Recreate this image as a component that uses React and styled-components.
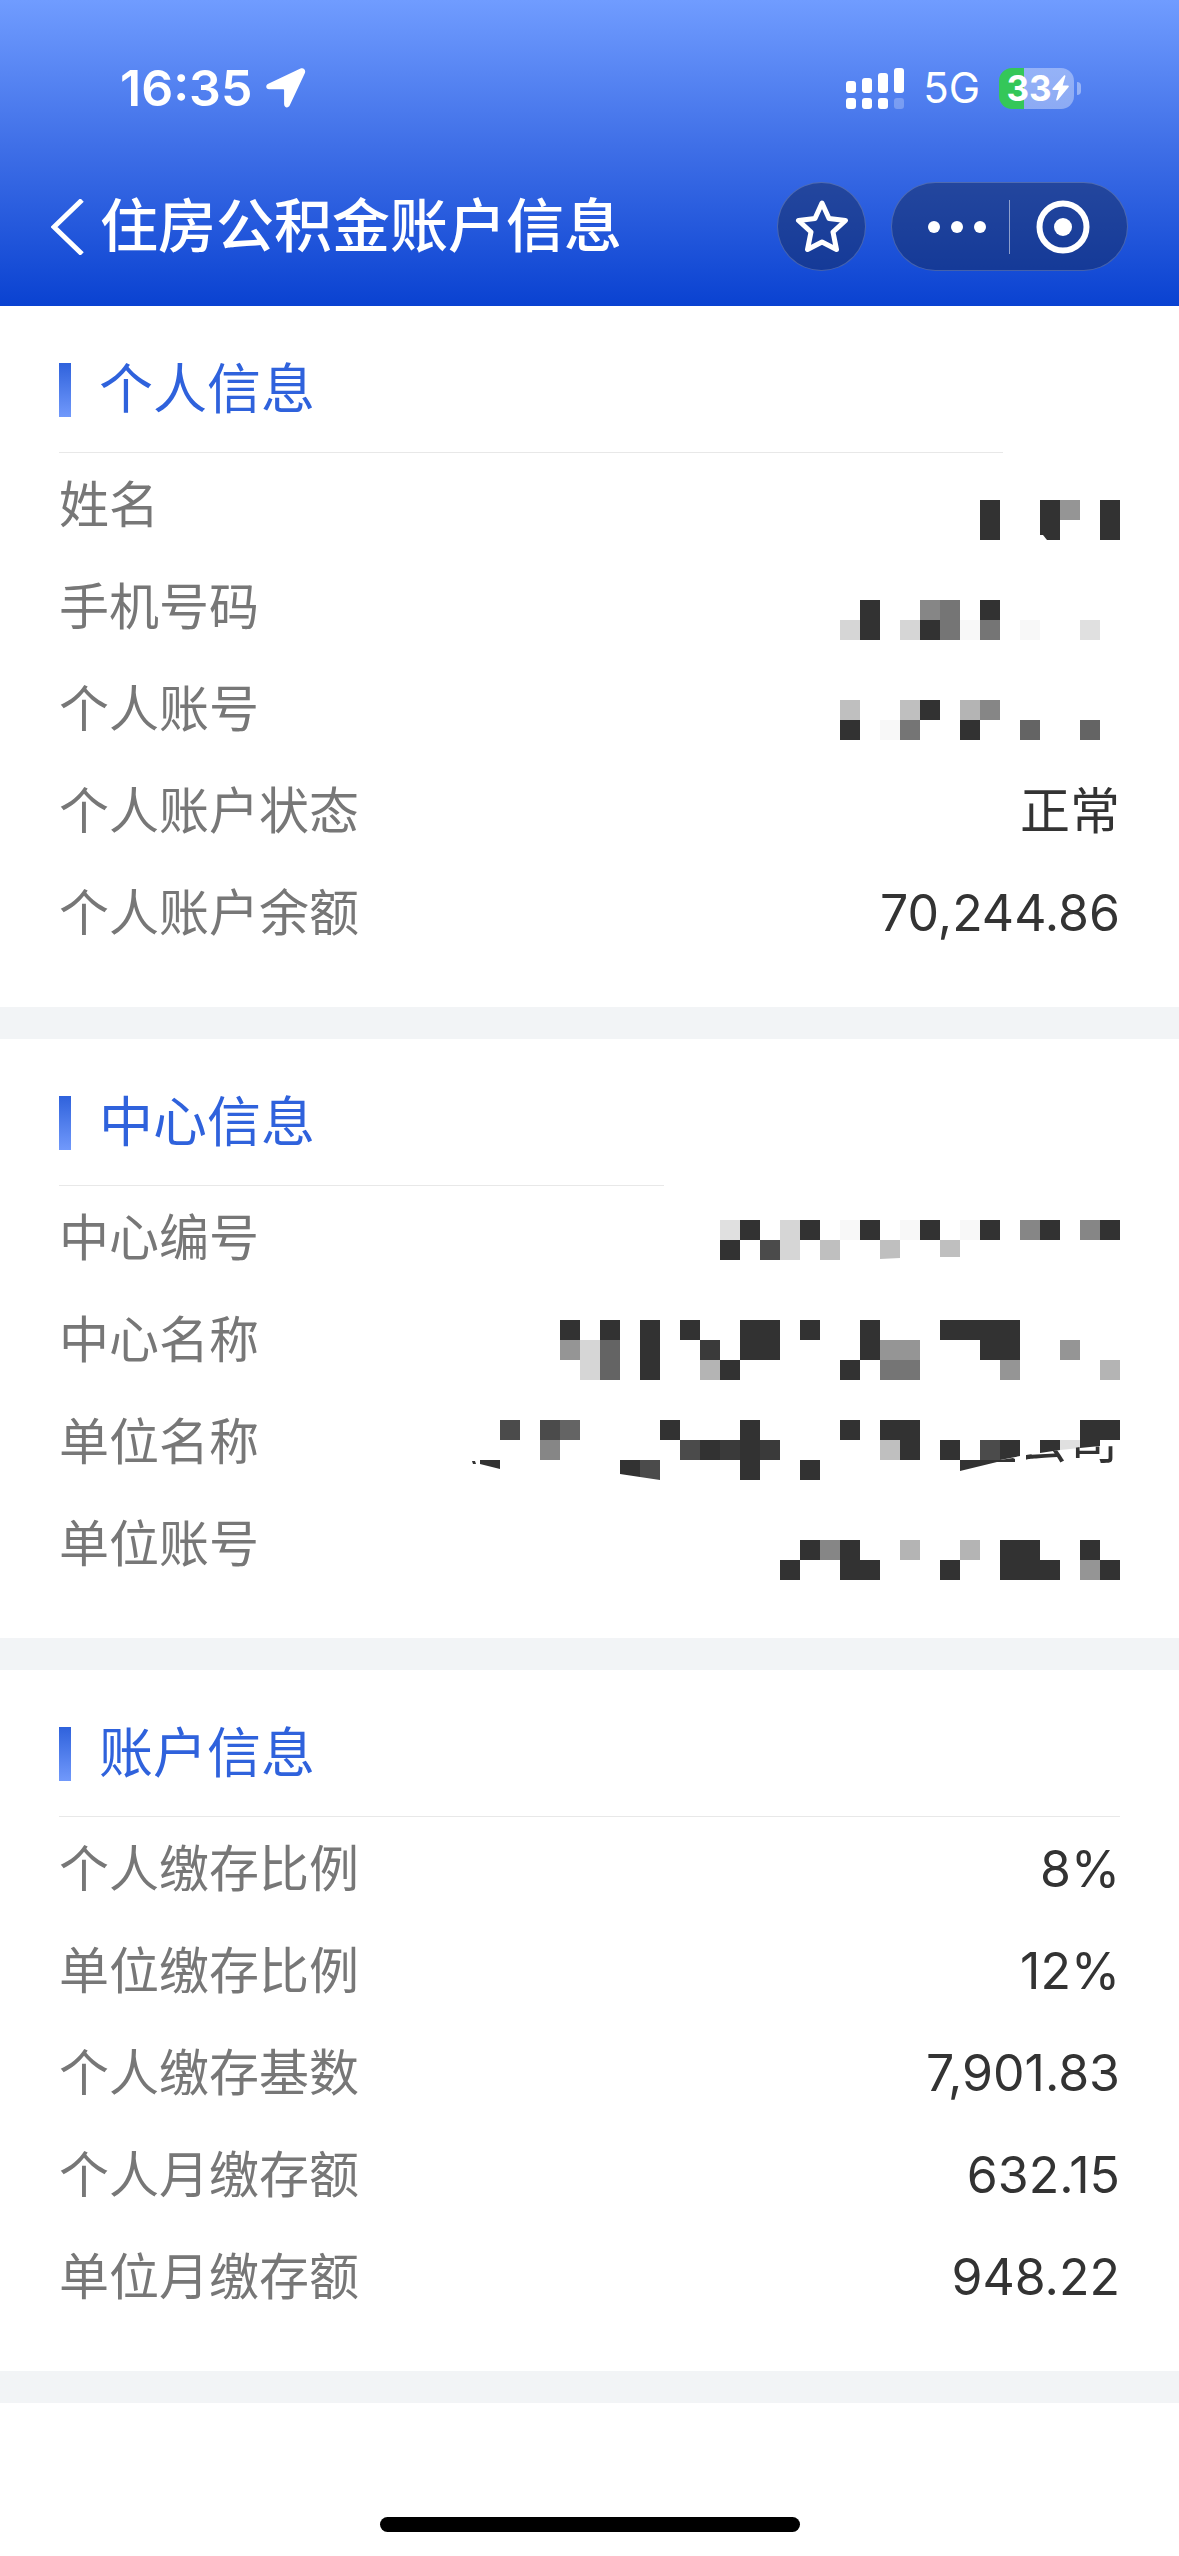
import React from "react";
import styled, { createGlobalStyle } from "styled-components";

const GlobalStyle = createGlobalStyle`
  *, *::before, *::after { box-sizing: border-box; }
  body {
    margin: 0;
    background: #fff;
    font-family: Inter, "Noto Sans CJK SC", sans-serif;
  }
`;

const Screen = styled.div`
  display: flex;
  flex-direction: column;
  min-height: 100vh;
`;

const Header = styled.header`
  padding-top: 60px;
  background: linear-gradient(#709cff, #3f6fe7 48%, #0a42d1);
  color: #fff;
`;

const StatusBar = styled.div`
  display: flex;
  align-items: center;
  justify-content: space-between;
  height: 56px;
  padding: 0 98px 0 120px;
`;

const StatusGroup = styled.div`
  display: flex;
  align-items: center;
  gap: ${(p) => p.$gap}px;
`;

const Time = styled.time`
  font-size: 50px;
  font-weight: 600;
  line-height: 56px;
`;

const Network = styled.span`
  font-size: 42px;
  line-height: 48px;
`;

const Battery = styled.span`
  display: flex;
  align-items: center;
  justify-content: center;
  width: 75px;
  height: 41px;
  padding-left: 2px;
  border-radius: 13px;
  background: linear-gradient(to right, #34c759 33%, rgba(255, 255, 255, 0.36) 33%);
  font-size: 35px;
  font-weight: 700;
  line-height: 41px;
`;

const BatteryTip = styled.span`
  width: 4px;
  height: 13px;
  border-radius: 0 6px 6px 0;
  background: rgba(255, 255, 255, 0.4);
`;

const NavBar = styled.nav`
  display: flex;
  align-items: center;
  margin-top: 66px;
  padding: 0 51px 35px;
`;

const IconButton = styled.button`
  display: flex;
  align-items: center;
  justify-content: center;
  padding: 0;
  border: 0;
  background: none;
  color: inherit;
`;

const Title = styled.h1`
  flex: 1;
  margin: 0 0 0 15px;
  font-size: 58px;
  font-weight: 500;
  line-height: 89px;
`;

const StarButton = styled(IconButton)`
  width: 89px;
  height: 89px;
  margin-right: 25px;
  border: 1px solid rgba(255, 255, 255, 0.2);
  border-radius: 50%;
  background: rgba(20, 40, 90, 0.5);
`;

const Capsule = styled.div`
  display: flex;
  align-items: center;
  width: 237px;
  height: 89px;
  border: 1px solid rgba(255, 255, 255, 0.2);
  border-radius: 45px;
  background: rgba(20, 40, 90, 0.5);
`;

const CapsuleButton = styled(IconButton)`
  flex: 1;
  height: 100%;
  padding: ${(p) => p.$padding};
`;

const CapsuleDivider = styled.span`
  width: 1px;
  height: 54px;
  background: rgba(255, 255, 255, 0.5);
`;

const Section = styled.section`
  padding: 57px 59px 42px;
  border-bottom: 32px solid #f2f4f6;
`;

const SectionHeading = styled.h2`
  display: flex;
  align-items: center;
  gap: 28px;
  height: 54px;
  margin: 0 0 35px;
  color: #2f62dc;
  font-size: 54px;
  font-weight: 400;
  line-height: 52px;

  &::before {
    content: "";
    width: 12px;
    height: 54px;
    background: linear-gradient(#2f62dc, #7199fb);
  }
`;

const Rule = styled.hr`
  width: ${(p) => p.$width};
  height: 1px;
  margin: 0 0 2px;
  border: 0;
  background: #e8e8e8;
`;

const Fields = styled.dl`
  margin: 0;
`;

const Field = styled.div`
  display: flex;
  align-items: center;
  justify-content: space-between;
  height: 102px;
  padding-bottom: 2px;
  font-size: 50px;
  line-height: 60px;
`;

const FieldLabel = styled.dt`
  color: #777;
`;

const FieldValue = styled.dd`
  margin: 0;
  color: #333;
`;

const MosaicSvg = styled.svg`
  display: block;
  overflow: visible;
`;

const HomeArea = styled.footer`
  display: flex;
  align-items: flex-end;
  justify-content: center;
  flex: 1;
  padding-bottom: 24px;
`;

const HomeIndicator = styled.div`
  width: 36%;
  max-width: 420px;
  height: 15px;
  border-radius: 8px;
  background: #000;
`;

const SHADES = {
  "#": "#323232",
  a: "#3a3a3a",
  b: "#4b4b4b",
  c: "#646464",
  d: "#757575",
  e: "#868686",
  f: "#959595",
  g: "#b4b4b4",
  h: "#bfbfbf",
  i: "#d6d6d6",
  j: "#e0e0e0",
  k: "#f8f8f8",
};

const CELL = 20;

/* Hides a private value behind grey cells, one character per cell. */
function Mosaic({ rows, top, children }) {
  const width = rows[0].length * CELL;
  return (
    <MosaicSvg width={width} height="100" viewBox={`0 0 ${width} 100`} role="img" aria-label="已隐藏">
      <g transform={`translate(0 ${top})`}>
        <g shapeRendering="crispEdges">
          {rows.flatMap((row, y) =>
            [...row].map((shade, x) =>
              SHADES[shade] ? (
                <rect key={`${x}-${y}`} x={x * CELL} y={y * CELL} width={CELL} height={CELL} fill={SHADES[shade]} />
              ) : null
            )
          )}
        </g>
        {children}
      </g>
    </MosaicSvg>
  );
}

const nameMosaic = (
  <Mosaic top={45} rows={["#..#f.#", "#..#..#"]}>
    <path d="M60 35h3l4 5v1h-7z" fill="#fff" />
  </Mosaic>
);

const phoneMosaic = <Mosaic top={43} rows={[".#..ed.#......", "i#.i#dkd.k..j."]} />;

const accountMosaic = <Mosaic top={41} rows={["h..h#.ge......", "#.kd..#..c..c."]} />;

const centerNoMosaic = (
  <Mosaic top={32} rows={["j#.i#.k#.k#.k#.e#.e#", "#.bi.h..h..h........"]}>
    <path d="M160 39l20-1v2h-20zM220 37h20v3h-20z" fill="#fff" />
  </Mosaic>
);

const centerNameMosaic = (
  <Mosaic
    top={30}
    rows={["#.#.#.#..##.#..#...####.....", "fic.#..a.##....#ff...##..f..", ".ic.#..g#.....#.dd....f....g"]}
  />
);

const unitNameMosaic = (
  <Mosaic
    top={28}
    rows={["..b.bc....#...#....#.##........##", "....e......b#a#a.....h#.#.b#.#j#.", ".#......#b....#..#..............."]}
  >
    <path d="M20 44l20 5v12H20zM160 54l40 6v1h-40z" fill="#fff" />
    <path d="M12 41h3l1 3h-3z" fill="#323232" />
    <path d="M540 40l20-4v5h-20zM580 33l20-3v11h-20zM600 30l20-2v13h-20zM620 28l20-2v15h-20z" fill="#fff" />
    <path d="M500 40h40l13-2 2 1v3h-18l-37 9z" fill="#323232" />
    <clipPath id="residue">
      <path d="M566 35L620 27L660 26V60H566z" />
    </clipPath>
    <text x="558" y="39" fontSize="50" fill="#323232" clipPath="url(#residue)">
      公司
    </text>
  </Mosaic>
);

const unitAccountMosaic = <Mosaic top={46} rows={[".#e#..g..g.##..#.", "#..##...#..###.f#"]} />;

const SECTIONS = [
  {
    title: "个人信息",
    rule: "89%",
    fields: [
      ["姓名", nameMosaic],
      ["手机号码", phoneMosaic],
      ["个人账号", accountMosaic],
      ["个人账户状态", "正常"],
      ["个人账户余额", "70,244.86"],
    ],
  },
  {
    title: "中心信息",
    rule: "57%",
    fields: [
      ["中心编号", centerNoMosaic],
      ["中心名称", centerNameMosaic],
      ["单位名称", unitNameMosaic],
      ["单位账号", unitAccountMosaic],
    ],
  },
  {
    title: "账户信息",
    rule: "100%",
    fields: [
      ["个人缴存比例", "8%"],
      ["单位缴存比例", "12%"],
      ["个人缴存基数", "7,901.83"],
      ["个人月缴存额", "632.15"],
      ["单位月缴存额", "948.22"],
    ],
  },
];

function LocationArrow() {
  return (
    <svg width="40" height="40" viewBox="0 0 40 40" fill="currentColor" aria-hidden="true">
      <path d="M34.5.6 2.3 15.8C-.8 17.3-.3 21.200 3.200 21.200H17c.7 0 1.100.4 1.100 1.100V36c0 3.900 4.200 4.600 5.700 1.300L38.800 5.200C40.200 2.100 37.600-.8 34.500.6z" />
    </svg>
  );
}

function SignalBars() {
  return (
    <svg width="58" height="41" viewBox="0 0 58 41" fill="currentColor" aria-hidden="true">
      <rect x="0" y="13" width="10" height="12" rx="3" />
      <rect x="16" y="10" width="10" height="15" rx="3" />
      <rect x="32" y="5" width="10" height="20" rx="3" />
      <rect x="48" y="0" width="10" height="25" rx="3" />
      <rect x="0" y="30" width="10" height="11" rx="3" />
      <rect x="16" y="30" width="10" height="11" rx="3" />
      <rect x="32" y="30" width="10" height="11" rx="3" />
      <rect x="48" y="30" width="10" height="11" rx="3" opacity="0.25" />
    </svg>
  );
}

function Bolt() {
  return (
    <svg width="17" height="26" viewBox="0 0 17 26" fill="currentColor" aria-hidden="true">
      <path d="M12 .6.6 13.600c-.5.700-.2 1.400.6 1.400h5.600L4.200 24.500c-.3 1.100.7 1.500 1.400.7L16.600 12c.5-.7.2-1.400-.6-1.400h-5.300l2.700-9.300C13.700.3 12.700-.2 12 .6z" />
    </svg>
  );
}

export default function App() {
  return (
    <Screen>
      <GlobalStyle />
      <Header>
        <StatusBar>
          <StatusGroup $gap={14}>
            <Time>16:35</Time>
            <LocationArrow />
          </StatusGroup>
          <StatusGroup $gap={19}>
            <SignalBars />
            <Network>5G</Network>
            <StatusGroup $gap={3}>
              <Battery>
                33
                <Bolt />
              </Battery>
              <BatteryTip />
            </StatusGroup>
          </StatusGroup>
        </StatusBar>
        <NavBar>
          <IconButton type="button" aria-label="返回">
            <svg width="34" height="56" viewBox="0 0 34 56" fill="none" stroke="currentColor" strokeWidth="5">
              <path d="M31 1 3 28l28 27" />
            </svg>
          </IconButton>
          <Title>住房公积金账户信息</Title>
          <StarButton type="button" aria-label="收藏">
            <svg width="54" height="54" viewBox="0 0 54 54" fill="none" stroke="currentColor" strokeWidth="5" strokeLinejoin="round">
              <path d="M27 3l7 15.500 16.500 2L38 32l3.500 17.500L27 42l-14.500 7.500L16 32 3.500 20.500l16.500-2z" />
            </svg>
          </StarButton>
          <Capsule>
            <CapsuleButton type="button" aria-label="更多" $padding="0 0 0 12px">
              <svg width="58" height="12" viewBox="0 0 58 12" fill="currentColor">
                <circle cx="6" cy="6" r="6" />
                <circle cx="29" cy="6" r="6" />
                <circle cx="52" cy="6" r="6" />
              </svg>
            </CapsuleButton>
            <CapsuleDivider />
            <CapsuleButton type="button" aria-label="关闭" $padding="0 12px 0 0">
              <svg width="54" height="54" viewBox="0 0 54 54">
                <circle cx="27" cy="27" r="23.500" fill="none" stroke="currentColor" strokeWidth="6" />
                <circle cx="27" cy="27" r="9" fill="currentColor" />
              </svg>
            </CapsuleButton>
          </Capsule>
        </NavBar>
      </Header>
      <main>
        {SECTIONS.map((section) => (
          <Section key={section.title}>
            <SectionHeading>{section.title}</SectionHeading>
            <Rule $width={section.rule} />
            <Fields>
              {section.fields.map(([label, value]) => (
                <Field key={label}>
                  <FieldLabel>{label}</FieldLabel>
                  <FieldValue>{value}</FieldValue>
                </Field>
              ))}
            </Fields>
          </Section>
        ))}
      </main>
      <HomeArea>
        <HomeIndicator />
      </HomeArea>
    </Screen>
  );
}
